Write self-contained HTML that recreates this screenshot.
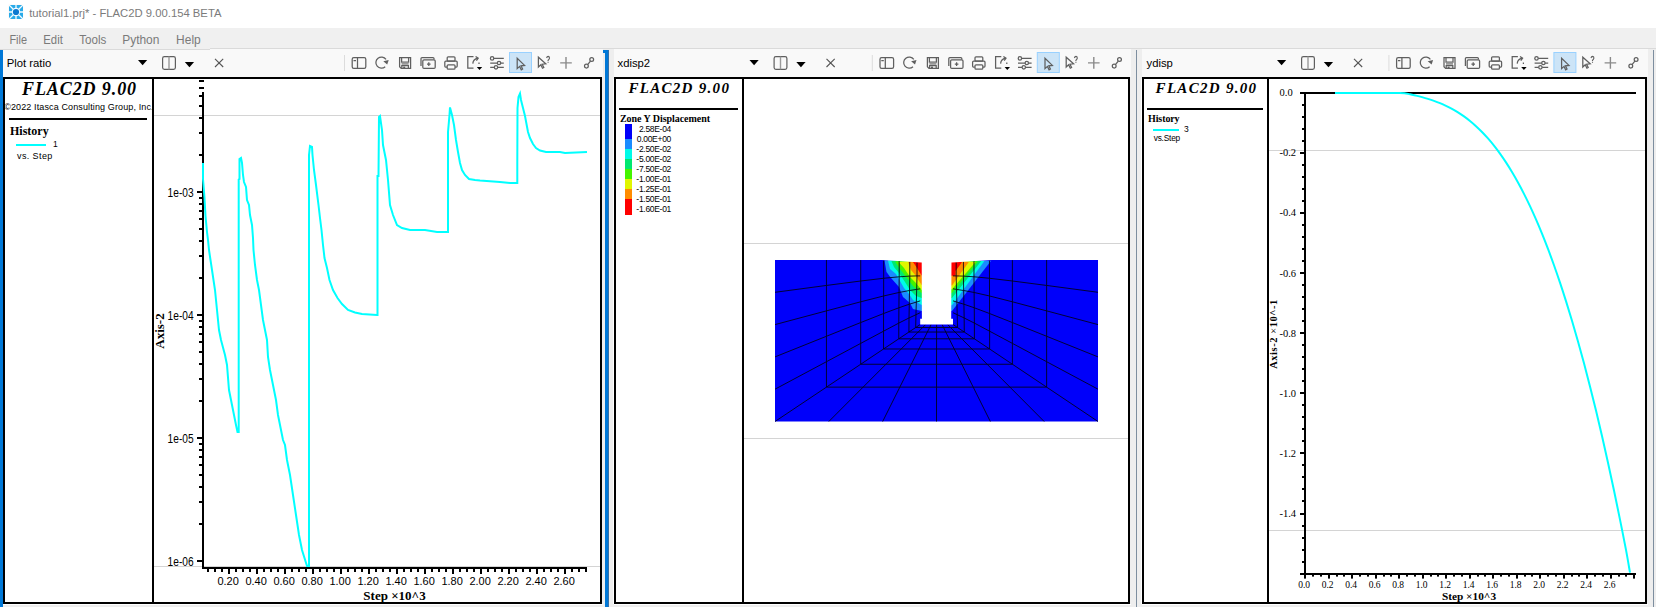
<!DOCTYPE html><html><head><meta charset="utf-8"><style>
html,body{margin:0;padding:0;width:1656px;height:607px;overflow:hidden;background:#eeeeee;}
svg{position:absolute;left:0;top:0;display:block}
.s{font-family:"Liberation Sans",sans-serif}.r{font-family:"Liberation Serif",serif}
</style></head><body>
<svg width="1656" height="607" viewBox="0 0 1656 607">
<rect x="0" y="0" width="1656" height="28" fill="#ffffff" />
<rect x="0" y="28" width="1656" height="21" fill="#f0f0f0" />
<rect x="8.6" y="4.6" width="14.6" height="14.6" fill="#fdf3ee"/>
<rect x="9" y="5" width="14" height="14" fill="#29aae8"/>
<path d="M9,5 L23,19 M23,5 L9,19 M16,5 V19 M9,12 H23" stroke="#f4fbff" stroke-width="1.3"/>
<circle cx="16" cy="12" r="4.2" fill="#f4fbff"/><circle cx="16" cy="12" r="3.1" fill="#0b78d0"/>
<text x="29.2" y="16.8" class="s" font-size="11.5" fill="#7b7b7b" text-anchor="start" font-weight="normal" font-style="normal" textLength="192.3" lengthAdjust="spacingAndGlyphs">tutorial1.prj* - FLAC2D 9.00.154 BETA</text>
<text x="9.4" y="43.8" class="s" font-size="12" fill="#7a7a7a" text-anchor="start" font-weight="normal" font-style="normal" textLength="17.6" lengthAdjust="spacingAndGlyphs">File</text>
<text x="43.3" y="43.8" class="s" font-size="12" fill="#7a7a7a" text-anchor="start" font-weight="normal" font-style="normal" textLength="19.5" lengthAdjust="spacingAndGlyphs">Edit</text>
<text x="79.2" y="43.8" class="s" font-size="12" fill="#7a7a7a" text-anchor="start" font-weight="normal" font-style="normal" textLength="27.1" lengthAdjust="spacingAndGlyphs">Tools</text>
<text x="122.2" y="43.8" class="s" font-size="12" fill="#7a7a7a" text-anchor="start" font-weight="normal" font-style="normal" textLength="37.2" lengthAdjust="spacingAndGlyphs">Python</text>
<text x="176.1" y="43.8" class="s" font-size="12" fill="#7a7a7a" text-anchor="start" font-weight="normal" font-style="normal" textLength="24.6" lengthAdjust="spacingAndGlyphs">Help</text>
<rect x="3" y="49" width="600" height="28" fill="#f9f9f9" />
<text x="6.7" y="67" class="s" font-size="11.3" fill="#000" text-anchor="start" font-weight="normal" font-style="normal" >Plot ratio</text>
<g transform="translate(0,0)">
<path d="M138,60 H147.2 L142.6,65.2 Z" fill="#000"/>
<rect x="162.6" y="56.6" width="12.8" height="12.8" rx="1.8" fill="none" stroke="#5f5f5f" stroke-width="1.2"/>
<path d="M169,56.6 V69.4" stroke="#9a9a9a" stroke-width="1.4"/>
<path d="M184.8,62 H194.1 L189.45,67.3 Z" fill="#000"/>
<path d="M215,58.8 L223.2,67 M223.2,58.8 L215,67" stroke="#555" stroke-width="1.1"/>
</g>
<g transform="translate(0,0)" fill="none" stroke="#5f5f5f" stroke-width="1.25">
<rect x="344" y="55" width="1" height="16" fill="#dcdcdc" stroke="none"/>
<rect x="352.2" y="57.6" width="13.6" height="10.8" rx="1.6"/>
<path d="M357.5,57.6 V68.4 M353.5,60.5 H356" />
<path d="M385.2,66.8 A5.6,5.6 0 1 1 386.0,59.3" />
<path d="M383.3,61.2 L388.7,59.9 L387.2,64.6 Z" fill="#5f5f5f" stroke="none"/>
<path d="M399.6,57.5 H410.6 V68.4 H401.2 L399.6,66.8 Z" />
<path d="M401.6,57.5 V62.2 H408.6 V57.5" />
<rect x="401.6" y="62.6" width="7" height="2.2" fill="#9a9a9a" stroke="none"/>
<path d="M401.8,68.4 V65.6 H408.4 V68.4" />
<rect x="403.2" y="66.6" width="2" height="2" fill="#5f5f5f" stroke="none"/>
<path d="M421.0,66.0 V58.6 Q421.0,57.6 422.0,57.6 H433.0 Q434,57.6 434,58.6 V59.6" />
<rect x="422.8" y="59.8" width="12.4" height="8.6" rx="1.2"/>
<path d="M427,64.1 H430.6 M428.8,62.3 V65.9" />
<rect x="447.2" y="56.8" width="7.8" height="4.4" rx="1"/>
<path d="M447,67 H445.6 Q444.8,67 444.8,66 V62.2 Q444.8,61.2 445.8,61.2 H456.2 Q457.2,61.2 457.2,62.2 V66 Q457.2,67 456.4,67 H455" />
<rect x="447.2" y="64.8" width="7.8" height="4.4" rx="1"/>
<path d="M473.5,56.6 H467.8 V68 H473.5" />
<path d="M472.8,63.6 Q473.2,59.2 477.8,58.2" />
<path d="M475.6,56.4 L478.2,58.2 L476.4,60.6" />
<path d="M479,62.5 V64" />
<path d="M476.8,67 H482.2 L479.5,70 Z" fill="#000" stroke="none"/>
<path d="M490.2,58.4 H503.8 M490.2,63 H503.8 M490.2,67.3 H503.8" />
<circle cx="492.1" cy="58.4" r="1.7" fill="#f9f9f9"/><circle cx="499" cy="63" r="1.7" fill="#f9f9f9"/><circle cx="496" cy="67.3" r="1.7" fill="#f9f9f9"/>
<rect x="509.5" y="52.5" width="22" height="20" fill="#cce4f7" stroke="#99d1ff" stroke-width="1"/>
<path d="M517.2,58.2 V68.6 L519.6,66.4 L521.3,69.8 L522.6,69.1 L521,65.8 L524.6,65.4 Z" fill="#cce4f7"/>
<path d="M538.4,57.2 V67 L540.8,64.8 L542.5,68.2 L543.8,67.5 L542.2,64.2 L545.8,63.8 Z" />
<path d="M546.6,58 Q547,56.4 548.2,56.4 Q549.6,56.6 549.5,58.2 Q549.3,59.4 548.1,60.2 V61.2 M548.1,62.2 V63" stroke-width="1.1"/>
<path d="M560.2,62.9 H571.8 M566,57.1 V68.7" stroke="#8a8a8a" stroke-width="1.4"/>
<circle cx="586.4" cy="66.1" r="1.9"/><circle cx="591.7" cy="59.6" r="1.9"/><path d="M587.6,64.6 L590.5,61.1"/>
</g>
<rect x="614" y="49" width="517" height="28" fill="#f9f9f9" />
<text x="617.5" y="67" class="s" font-size="11.3" fill="#000" text-anchor="start" font-weight="normal" font-style="normal" >xdisp2</text>
<g transform="translate(611.5,0)">
<path d="M138,60 H147.2 L142.6,65.2 Z" fill="#000"/>
<rect x="162.6" y="56.6" width="12.8" height="12.8" rx="1.8" fill="none" stroke="#5f5f5f" stroke-width="1.2"/>
<path d="M169,56.6 V69.4" stroke="#9a9a9a" stroke-width="1.4"/>
<path d="M184.8,62 H194.1 L189.45,67.3 Z" fill="#000"/>
<path d="M215,58.8 L223.2,67 M223.2,58.8 L215,67" stroke="#555" stroke-width="1.1"/>
</g>
<g transform="translate(527.8,0)" fill="none" stroke="#5f5f5f" stroke-width="1.25">
<rect x="344" y="55" width="1" height="16" fill="#dcdcdc" stroke="none"/>
<rect x="352.2" y="57.6" width="13.6" height="10.8" rx="1.6"/>
<path d="M357.5,57.6 V68.4 M353.5,60.5 H356" />
<path d="M385.2,66.8 A5.6,5.6 0 1 1 386.0,59.3" />
<path d="M383.3,61.2 L388.7,59.9 L387.2,64.6 Z" fill="#5f5f5f" stroke="none"/>
<path d="M399.6,57.5 H410.6 V68.4 H401.2 L399.6,66.8 Z" />
<path d="M401.6,57.5 V62.2 H408.6 V57.5" />
<rect x="401.6" y="62.6" width="7" height="2.2" fill="#9a9a9a" stroke="none"/>
<path d="M401.8,68.4 V65.6 H408.4 V68.4" />
<rect x="403.2" y="66.6" width="2" height="2" fill="#5f5f5f" stroke="none"/>
<path d="M421.0,66.0 V58.6 Q421.0,57.6 422.0,57.6 H433.0 Q434,57.6 434,58.6 V59.6" />
<rect x="422.8" y="59.8" width="12.4" height="8.6" rx="1.2"/>
<path d="M427,64.1 H430.6 M428.8,62.3 V65.9" />
<rect x="447.2" y="56.8" width="7.8" height="4.4" rx="1"/>
<path d="M447,67 H445.6 Q444.8,67 444.8,66 V62.2 Q444.8,61.2 445.8,61.2 H456.2 Q457.2,61.2 457.2,62.2 V66 Q457.2,67 456.4,67 H455" />
<rect x="447.2" y="64.8" width="7.8" height="4.4" rx="1"/>
<path d="M473.5,56.6 H467.8 V68 H473.5" />
<path d="M472.8,63.6 Q473.2,59.2 477.8,58.2" />
<path d="M475.6,56.4 L478.2,58.2 L476.4,60.6" />
<path d="M479,62.5 V64" />
<path d="M476.8,67 H482.2 L479.5,70 Z" fill="#000" stroke="none"/>
<path d="M490.2,58.4 H503.8 M490.2,63 H503.8 M490.2,67.3 H503.8" />
<circle cx="492.1" cy="58.4" r="1.7" fill="#f9f9f9"/><circle cx="499" cy="63" r="1.7" fill="#f9f9f9"/><circle cx="496" cy="67.3" r="1.7" fill="#f9f9f9"/>
<rect x="509.5" y="52.5" width="22" height="20" fill="#cce4f7" stroke="#99d1ff" stroke-width="1"/>
<path d="M517.2,58.2 V68.6 L519.6,66.4 L521.3,69.8 L522.6,69.1 L521,65.8 L524.6,65.4 Z" fill="#cce4f7"/>
<path d="M538.4,57.2 V67 L540.8,64.8 L542.5,68.2 L543.8,67.5 L542.2,64.2 L545.8,63.8 Z" />
<path d="M546.6,58 Q547,56.4 548.2,56.4 Q549.6,56.6 549.5,58.2 Q549.3,59.4 548.1,60.2 V61.2 M548.1,62.2 V63" stroke-width="1.1"/>
<path d="M560.2,62.9 H571.8 M566,57.1 V68.7" stroke="#8a8a8a" stroke-width="1.4"/>
<circle cx="586.4" cy="66.1" r="1.9"/><circle cx="591.7" cy="59.6" r="1.9"/><path d="M587.6,64.6 L590.5,61.1"/>
</g>
<rect x="1142" y="49" width="506" height="28" fill="#f9f9f9" />
<rect x="0" y="49" width="210" height="1" fill="#dadada" />
<rect x="210" y="48" width="1446" height="1" fill="#dadada" />
<text x="1146.5" y="67" class="s" font-size="11.3" fill="#000" text-anchor="start" font-weight="normal" font-style="normal" >ydisp</text>
<g transform="translate(1139,0)">
<path d="M138,60 H147.2 L142.6,65.2 Z" fill="#000"/>
<rect x="162.6" y="56.6" width="12.8" height="12.8" rx="1.8" fill="none" stroke="#5f5f5f" stroke-width="1.2"/>
<path d="M169,56.6 V69.4" stroke="#9a9a9a" stroke-width="1.4"/>
<path d="M184.8,62 H194.1 L189.45,67.3 Z" fill="#000"/>
<path d="M215,58.8 L223.2,67 M223.2,58.8 L215,67" stroke="#555" stroke-width="1.1"/>
</g>
<g transform="translate(1044.4,0)" fill="none" stroke="#5f5f5f" stroke-width="1.25">
<rect x="344" y="55" width="1" height="16" fill="#dcdcdc" stroke="none"/>
<rect x="352.2" y="57.6" width="13.6" height="10.8" rx="1.6"/>
<path d="M357.5,57.6 V68.4 M353.5,60.5 H356" />
<path d="M385.2,66.8 A5.6,5.6 0 1 1 386.0,59.3" />
<path d="M383.3,61.2 L388.7,59.9 L387.2,64.6 Z" fill="#5f5f5f" stroke="none"/>
<path d="M399.6,57.5 H410.6 V68.4 H401.2 L399.6,66.8 Z" />
<path d="M401.6,57.5 V62.2 H408.6 V57.5" />
<rect x="401.6" y="62.6" width="7" height="2.2" fill="#9a9a9a" stroke="none"/>
<path d="M401.8,68.4 V65.6 H408.4 V68.4" />
<rect x="403.2" y="66.6" width="2" height="2" fill="#5f5f5f" stroke="none"/>
<path d="M421.0,66.0 V58.6 Q421.0,57.6 422.0,57.6 H433.0 Q434,57.6 434,58.6 V59.6" />
<rect x="422.8" y="59.8" width="12.4" height="8.6" rx="1.2"/>
<path d="M427,64.1 H430.6 M428.8,62.3 V65.9" />
<rect x="447.2" y="56.8" width="7.8" height="4.4" rx="1"/>
<path d="M447,67 H445.6 Q444.8,67 444.8,66 V62.2 Q444.8,61.2 445.8,61.2 H456.2 Q457.2,61.2 457.2,62.2 V66 Q457.2,67 456.4,67 H455" />
<rect x="447.2" y="64.8" width="7.8" height="4.4" rx="1"/>
<path d="M473.5,56.6 H467.8 V68 H473.5" />
<path d="M472.8,63.6 Q473.2,59.2 477.8,58.2" />
<path d="M475.6,56.4 L478.2,58.2 L476.4,60.6" />
<path d="M479,62.5 V64" />
<path d="M476.8,67 H482.2 L479.5,70 Z" fill="#000" stroke="none"/>
<path d="M490.2,58.4 H503.8 M490.2,63 H503.8 M490.2,67.3 H503.8" />
<circle cx="492.1" cy="58.4" r="1.7" fill="#f9f9f9"/><circle cx="499" cy="63" r="1.7" fill="#f9f9f9"/><circle cx="496" cy="67.3" r="1.7" fill="#f9f9f9"/>
<rect x="509.5" y="52.5" width="22" height="20" fill="#cce4f7" stroke="#99d1ff" stroke-width="1"/>
<path d="M517.2,58.2 V68.6 L519.6,66.4 L521.3,69.8 L522.6,69.1 L521,65.8 L524.6,65.4 Z" fill="#cce4f7"/>
<path d="M538.4,57.2 V67 L540.8,64.8 L542.5,68.2 L543.8,67.5 L542.2,64.2 L545.8,63.8 Z" />
<path d="M546.6,58 Q547,56.4 548.2,56.4 Q549.6,56.6 549.5,58.2 Q549.3,59.4 548.1,60.2 V61.2 M548.1,62.2 V63" stroke-width="1.1"/>
<path d="M560.2,62.9 H571.8 M566,57.1 V68.7" stroke="#8a8a8a" stroke-width="1.4"/>
<circle cx="586.4" cy="66.1" r="1.9"/><circle cx="591.7" cy="59.6" r="1.9"/><path d="M587.6,64.6 L590.5,61.1"/>
</g>
<rect x="0" y="604" width="1656" height="3" fill="#eeeeee" />
<rect x="3" y="77" width="599" height="527" fill="#ffffff" />
<rect x="3" y="77" width="599" height="2" fill="#000" />
<rect x="3" y="602" width="599" height="2" fill="#000" />
<rect x="3" y="77" width="2" height="527" fill="#000" />
<rect x="600" y="77" width="2" height="527" fill="#000" />
<rect x="614" y="77" width="516" height="527" fill="#ffffff" />
<rect x="614" y="77" width="516" height="2" fill="#000" />
<rect x="614" y="602" width="516" height="2" fill="#000" />
<rect x="614" y="77" width="2" height="527" fill="#000" />
<rect x="1128" y="77" width="2" height="527" fill="#000" />
<rect x="1142" y="77" width="505" height="527" fill="#ffffff" />
<rect x="1142" y="77" width="505" height="2" fill="#000" />
<rect x="1142" y="602" width="505" height="2" fill="#000" />
<rect x="1142" y="77" width="2" height="527" fill="#000" />
<rect x="1645" y="77" width="2" height="527" fill="#000" />
<rect x="3" y="604" width="600" height="1" fill="#ffffff" />
<rect x="614" y="604" width="517" height="1" fill="#ffffff" />
<rect x="1142" y="604" width="506" height="1" fill="#ffffff" />
<rect x="0" y="50" width="3" height="557" fill="#0078d7" />
<rect x="605" y="50" width="3" height="557" fill="#0078d7" />
<rect x="608" y="50" width="1" height="557" fill="#3570a8" />
<rect x="603" y="50" width="2" height="3" fill="#0078d7" />
<rect x="613" y="79" width="1" height="525" fill="#ffffff" />
<rect x="1141" y="79" width="1" height="525" fill="#ffffff" />
<rect x="1136" y="50" width="1" height="557" fill="#7d8e9f" />
<rect x="1653" y="50" width="1" height="557" fill="#7d8e9f" />
<rect x="152" y="79" width="2" height="523" fill="#000" />
<text x="79.5" y="94.5" class="r" font-size="18" fill="#000" text-anchor="middle" font-weight="bold" font-style="italic" letter-spacing="0.9">FLAC2D 9.00</text>
<svg x="5" y="79" width="147" height="40" overflow="hidden"><text x="-0.8" y="31" class="s" font-size="9" letter-spacing="0.12">©2022 Itasca Consulting Group, Inc.</text></svg>
<rect x="9" y="118" width="138" height="2" fill="#000" />
<text x="10" y="135" class="r" font-size="12" fill="#000" text-anchor="start" font-weight="bold" font-style="normal" >History</text>
<rect x="16" y="144" width="30" height="2" fill="#00ffff" />
<text x="53" y="146.7" class="s" font-size="8.5" fill="#000" text-anchor="start" font-weight="normal" font-style="normal" >1</text>
<text x="17" y="159.4" class="s" font-size="9" fill="#000" text-anchor="start" font-weight="normal" font-style="normal" letter-spacing="0.4">vs. Step</text>
<rect x="154" y="115" width="446" height="1" fill="#d4d4d4" />
<rect x="154" y="566" width="446" height="1" fill="#d4d4d4" />
<rect x="202" y="92" width="2" height="477" fill="#000" />
<rect x="197" y="560" width="5" height="2" fill="#000" />
<rect x="199" y="523" width="3" height="2" fill="#000" />
<rect x="199" y="501" width="3" height="2" fill="#000" />
<rect x="199" y="486" width="3" height="2" fill="#000" />
<rect x="199" y="474" width="3" height="2" fill="#000" />
<rect x="199" y="464" width="3" height="2" fill="#000" />
<rect x="199" y="456" width="3" height="2" fill="#000" />
<rect x="199" y="449" width="3" height="2" fill="#000" />
<rect x="199" y="443" width="3" height="2" fill="#000" />
<rect x="197" y="437" width="5" height="2" fill="#000" />
<rect x="199" y="400" width="3" height="2" fill="#000" />
<rect x="199" y="378" width="3" height="2" fill="#000" />
<rect x="199" y="363" width="3" height="2" fill="#000" />
<rect x="199" y="351" width="3" height="2" fill="#000" />
<rect x="199" y="341" width="3" height="2" fill="#000" />
<rect x="199" y="333" width="3" height="2" fill="#000" />
<rect x="199" y="326" width="3" height="2" fill="#000" />
<rect x="199" y="320" width="3" height="2" fill="#000" />
<rect x="197" y="314" width="5" height="2" fill="#000" />
<rect x="199" y="277" width="3" height="2" fill="#000" />
<rect x="199" y="255" width="3" height="2" fill="#000" />
<rect x="199" y="240" width="3" height="2" fill="#000" />
<rect x="199" y="228" width="3" height="2" fill="#000" />
<rect x="199" y="218" width="3" height="2" fill="#000" />
<rect x="199" y="210" width="3" height="2" fill="#000" />
<rect x="199" y="203" width="3" height="2" fill="#000" />
<rect x="199" y="197" width="3" height="2" fill="#000" />
<rect x="197" y="191" width="5" height="2" fill="#000" />
<rect x="199" y="154" width="3" height="2" fill="#000" />
<rect x="199" y="132" width="3" height="2" fill="#000" />
<rect x="199" y="117" width="3" height="2" fill="#000" />
<rect x="199" y="105" width="3" height="2" fill="#000" />
<rect x="199" y="95" width="3" height="2" fill="#000" />
<rect x="199" y="87" width="5" height="2" fill="#000" />
<rect x="199" y="80" width="5" height="2" fill="#000" />
<text x="193.6" y="196.8" class="s" font-size="13.2" fill="#000" text-anchor="end" font-weight="normal" font-style="normal" textLength="26" lengthAdjust="spacingAndGlyphs">1e-03</text>
<text x="193.6" y="319.8" class="s" font-size="13.2" fill="#000" text-anchor="end" font-weight="normal" font-style="normal" textLength="26" lengthAdjust="spacingAndGlyphs">1e-04</text>
<text x="193.6" y="442.8" class="s" font-size="13.2" fill="#000" text-anchor="end" font-weight="normal" font-style="normal" textLength="26" lengthAdjust="spacingAndGlyphs">1e-05</text>
<text x="193.6" y="565.8" class="s" font-size="13.2" fill="#000" text-anchor="end" font-weight="normal" font-style="normal" textLength="26" lengthAdjust="spacingAndGlyphs">1e-06</text>
<rect x="202" y="567" width="385" height="2" fill="#000" />
<rect x="207" y="569" width="2" height="3" fill="#000" />
<rect x="214" y="569" width="2" height="3" fill="#000" />
<rect x="221" y="569" width="2" height="3" fill="#000" />
<rect x="228" y="569" width="2" height="5" fill="#000" />
<rect x="235" y="569" width="2" height="3" fill="#000" />
<rect x="242" y="569" width="2" height="3" fill="#000" />
<rect x="249" y="569" width="2" height="3" fill="#000" />
<rect x="256" y="569" width="2" height="5" fill="#000" />
<rect x="263" y="569" width="2" height="3" fill="#000" />
<rect x="270" y="569" width="2" height="3" fill="#000" />
<rect x="277" y="569" width="2" height="3" fill="#000" />
<rect x="284" y="569" width="2" height="5" fill="#000" />
<rect x="291" y="569" width="2" height="3" fill="#000" />
<rect x="298" y="569" width="2" height="3" fill="#000" />
<rect x="305" y="569" width="2" height="3" fill="#000" />
<rect x="312" y="569" width="2" height="5" fill="#000" />
<rect x="319" y="569" width="2" height="3" fill="#000" />
<rect x="326" y="569" width="2" height="3" fill="#000" />
<rect x="333" y="569" width="2" height="3" fill="#000" />
<rect x="340" y="569" width="2" height="5" fill="#000" />
<rect x="347" y="569" width="2" height="3" fill="#000" />
<rect x="354" y="569" width="2" height="3" fill="#000" />
<rect x="361" y="569" width="2" height="3" fill="#000" />
<rect x="368" y="569" width="2" height="5" fill="#000" />
<rect x="375" y="569" width="2" height="3" fill="#000" />
<rect x="382" y="569" width="2" height="3" fill="#000" />
<rect x="389" y="569" width="2" height="3" fill="#000" />
<rect x="396" y="569" width="2" height="5" fill="#000" />
<rect x="403" y="569" width="2" height="3" fill="#000" />
<rect x="410" y="569" width="2" height="3" fill="#000" />
<rect x="417" y="569" width="2" height="3" fill="#000" />
<rect x="424" y="569" width="2" height="5" fill="#000" />
<rect x="431" y="569" width="2" height="3" fill="#000" />
<rect x="438" y="569" width="2" height="3" fill="#000" />
<rect x="445" y="569" width="2" height="3" fill="#000" />
<rect x="452" y="569" width="2" height="5" fill="#000" />
<rect x="459" y="569" width="2" height="3" fill="#000" />
<rect x="466" y="569" width="2" height="3" fill="#000" />
<rect x="473" y="569" width="2" height="3" fill="#000" />
<rect x="480" y="569" width="2" height="5" fill="#000" />
<rect x="487" y="569" width="2" height="3" fill="#000" />
<rect x="494" y="569" width="2" height="3" fill="#000" />
<rect x="501" y="569" width="2" height="3" fill="#000" />
<rect x="508" y="569" width="2" height="5" fill="#000" />
<rect x="515" y="569" width="2" height="3" fill="#000" />
<rect x="522" y="569" width="2" height="3" fill="#000" />
<rect x="529" y="569" width="2" height="3" fill="#000" />
<rect x="536" y="569" width="2" height="5" fill="#000" />
<rect x="543" y="569" width="2" height="3" fill="#000" />
<rect x="550" y="569" width="2" height="3" fill="#000" />
<rect x="557" y="569" width="2" height="3" fill="#000" />
<rect x="564" y="569" width="2" height="5" fill="#000" />
<rect x="571" y="569" width="2" height="3" fill="#000" />
<rect x="578" y="569" width="2" height="3" fill="#000" />
<rect x="585" y="569" width="2" height="3" fill="#000" />
<text x="228.1" y="585" class="s" font-size="11" fill="#000" text-anchor="middle" font-weight="normal" font-style="normal" >0.20</text>
<text x="256.1" y="585" class="s" font-size="11" fill="#000" text-anchor="middle" font-weight="normal" font-style="normal" >0.40</text>
<text x="284.1" y="585" class="s" font-size="11" fill="#000" text-anchor="middle" font-weight="normal" font-style="normal" >0.60</text>
<text x="312.1" y="585" class="s" font-size="11" fill="#000" text-anchor="middle" font-weight="normal" font-style="normal" >0.80</text>
<text x="340.1" y="585" class="s" font-size="11" fill="#000" text-anchor="middle" font-weight="normal" font-style="normal" >1.00</text>
<text x="368.1" y="585" class="s" font-size="11" fill="#000" text-anchor="middle" font-weight="normal" font-style="normal" >1.20</text>
<text x="396.1" y="585" class="s" font-size="11" fill="#000" text-anchor="middle" font-weight="normal" font-style="normal" >1.40</text>
<text x="424.1" y="585" class="s" font-size="11" fill="#000" text-anchor="middle" font-weight="normal" font-style="normal" >1.60</text>
<text x="452.1" y="585" class="s" font-size="11" fill="#000" text-anchor="middle" font-weight="normal" font-style="normal" >1.80</text>
<text x="480.1" y="585" class="s" font-size="11" fill="#000" text-anchor="middle" font-weight="normal" font-style="normal" >2.00</text>
<text x="508.1" y="585" class="s" font-size="11" fill="#000" text-anchor="middle" font-weight="normal" font-style="normal" >2.20</text>
<text x="536.1" y="585" class="s" font-size="11" fill="#000" text-anchor="middle" font-weight="normal" font-style="normal" >2.40</text>
<text x="564.1" y="585" class="s" font-size="11" fill="#000" text-anchor="middle" font-weight="normal" font-style="normal" >2.60</text>
<text x="394.5" y="600" class="r" font-size="13" fill="#000" text-anchor="middle" font-weight="bold" font-style="normal" >Step ×10^3</text>
<text class="r" font-size="13" font-weight="bold" text-anchor="middle" transform="translate(164.3,331) rotate(-90)">Axis-2</text>
<polyline fill="none" stroke="#00ffff" stroke-width="2" stroke-linejoin="miter" points="203,163 203,179 204.5,198 205.5,216 207,232 208,240 209,250 212,270 215,290 217,310 219,330 221,340 225,355 227,365 229,390 231,400 234,415 236,425 237.5,432 238.7,432 238.7,179.6 239.5,179 239.5,159 241,158 242,163 243,175 244,182 246,187 247,200 249,205 250,215 252,225 253,238 253.5,250 255,265 257,280 259,290 261,305 263,320 265,330 267,340 268,357 270,370 273,385 276,400 278,415 280,425 283,440 285,445 287,460 290,475 293,495 296,515 299,535 302,550 307,566 307.5,566 309,566 309,155 310,146 312,147 312.5,155 314,170 316,185 318.5,205 320,218 321.5,230 323,245 324.5,258 327,268 329.5,280 333,290 337.5,298 342,304 348,310 355,312.5 362,314 377,315 377.5,315 377.5,176 378.5,176 379,117 380,116 382,130 383,145 386,160 388,180 390,205 393,215 397,225 402,228 410,230 425,230 437,232 447,232 448,232 448,132 449.5,115 450,107.4 452,115 454,125 456,140 458,152 460,163 462,170 465,175 469,179 475,180 480,180.5 500,182 510,183 517,183 517.3,183 517.3,162 517.5,108 518.5,97 520,93.5 521,100 523,108 525,116 526.5,124 528,132 530,138 533,144 536,148 540,150.5 546,152 560,152 565,153 587,152"/>
<rect x="742" y="79" width="2" height="523" fill="#000" />
<text x="679.3" y="92.6" class="r" font-size="15" fill="#000" text-anchor="middle" font-weight="bold" font-style="italic" letter-spacing="1.3">FLAC2D 9.00</text>
<rect x="619" y="108" width="119" height="2" fill="#000" />
<text x="620" y="122.3" class="r" font-size="10" fill="#000" text-anchor="start" font-weight="bold" font-style="normal" letter-spacing="-0.05">Zone Y Displacement</text>
<rect x="625" y="124" width="7" height="15" fill="#0000fa" />
<rect x="625" y="139" width="7" height="10" fill="#1a8cff" />
<rect x="625" y="149" width="7" height="10" fill="#00fbe8" />
<rect x="625" y="159" width="7" height="10" fill="#00e870" />
<rect x="625" y="169" width="7" height="10" fill="#44f400" />
<rect x="625" y="179" width="7" height="10" fill="#e0f600" />
<rect x="625" y="189" width="7" height="10" fill="#ff8c00" />
<rect x="625" y="199" width="7" height="16" fill="#ff0000" />
<text x="671" y="131.7" class="s" font-size="8.5" fill="#000" text-anchor="end" font-weight="normal" font-style="normal" letter-spacing="-0.3">2.58E-04</text>
<text x="671" y="142.0" class="s" font-size="8.5" fill="#000" text-anchor="end" font-weight="normal" font-style="normal" letter-spacing="-0.3">0.00E+00</text>
<text x="671" y="152.0" class="s" font-size="8.5" fill="#000" text-anchor="end" font-weight="normal" font-style="normal" letter-spacing="-0.3">-2.50E-02</text>
<text x="671" y="162.0" class="s" font-size="8.5" fill="#000" text-anchor="end" font-weight="normal" font-style="normal" letter-spacing="-0.3">-5.00E-02</text>
<text x="671" y="172.0" class="s" font-size="8.5" fill="#000" text-anchor="end" font-weight="normal" font-style="normal" letter-spacing="-0.3">-7.50E-02</text>
<text x="671" y="182.0" class="s" font-size="8.5" fill="#000" text-anchor="end" font-weight="normal" font-style="normal" letter-spacing="-0.3">-1.00E-01</text>
<text x="671" y="192.0" class="s" font-size="8.5" fill="#000" text-anchor="end" font-weight="normal" font-style="normal" letter-spacing="-0.3">-1.25E-01</text>
<text x="671" y="202.0" class="s" font-size="8.5" fill="#000" text-anchor="end" font-weight="normal" font-style="normal" letter-spacing="-0.3">-1.50E-01</text>
<text x="671" y="212.0" class="s" font-size="8.5" fill="#000" text-anchor="end" font-weight="normal" font-style="normal" letter-spacing="-0.3">-1.60E-01</text>
<rect x="744" y="243" width="384" height="1" fill="#d4d4d4" />
<rect x="744" y="438" width="384" height="1" fill="#d4d4d4" />
<rect x="775" y="260" width="323" height="161.5" fill="#0000fa" />
<polygon points="923,260 884.5,260.5 886.5,272 891,278 899,287 903,297 910,303 913,309 921.7,311 923,311" fill="#1a8cff"/>
<polygon points="950.5,260 990.9,261 952,311 950.5,311" fill="#1a8cff"/>
<polygon points="923,260 888,260.5 890,269 896,274 900,281 904,288 909,294 913,300 921.7,305 923,305" fill="#00fbe8"/>
<polygon points="950.5,260 984.4,261 952,305.2 950.5,305.2" fill="#00fbe8"/>
<polygon points="923,260 891.4,261 894,267 899,273 905,282 910,290 916,296 921.7,298 923,298" fill="#00e870"/>
<polygon points="950.5,260 981.3,261 952,298 950.5,298" fill="#00e870"/>
<polygon points="923,260 895,261.5 900,269 907,278 913,286 921.7,293 923,293" fill="#44f400"/>
<polygon points="950.5,260 978,261.5 952,293 950.5,293" fill="#44f400"/>
<polygon points="923,260 898.5,262 904,268 910,277 915,282 921.7,290 923,290" fill="#e0f600"/>
<polygon points="950.5,260 975.5,262 952,289.3 950.5,289.3" fill="#e0f600"/>
<polygon points="923,260 908.2,262 911,270 916,276 919,281 921.7,285 923,285" fill="#ff8c00"/>
<polygon points="950.5,260 968.8,262 952,285.5 950.5,285.5" fill="#ff8c00"/>
<polygon points="923,260 913,262 917,268 921.7,275.5 923,275.5" fill="#ff0000"/>
<polygon points="950.5,260 962,262.3 955.5,271 955.5,275.7 952,275.7 950.5,275.7" fill="#ff0000"/>
<path d="M917.02,262.39 L917.02,275.90 L916.68,289.40 L916.32,302.11 L915.96,314.71 L915.68,327.52 L922.66,327.52 L929.63,327.52 L936.60,327.52 L943.57,327.52 L950.54,327.52 L957.51,327.52 L957.23,314.71 L956.87,302.11 L956.51,289.40 L956.18,275.90 L956.18,262.39 M909.77,261.71 L909.77,276.11 L909.52,290.51 L909.28,304.23 L909.03,317.96 L908.92,332.04 L918.14,332.04 L927.37,332.04 L936.59,332.04 L945.82,332.04 L955.04,332.04 L964.27,332.04 L964.15,317.96 L963.91,304.23 L963.66,290.51 L963.42,276.12 L963.42,261.71 M899.20,261.03 L899.19,276.79 L899.05,292.47 L898.92,307.78 L898.78,323.10 L898.77,338.82 L911.37,338.82 L923.98,338.82 L936.59,338.82 L949.19,338.82 L961.80,338.82 L974.40,338.82 L974.39,323.10 L974.25,307.78 L974.12,292.47 L973.98,276.79 L973.97,261.03 M883.69,260.48 L883.68,278.28 L883.63,295.98 L883.57,313.54 L883.54,331.19 L883.54,348.99 L901.22,348.99 L918.90,348.99 L936.57,348.99 L954.25,348.99 L971.93,348.99 L989.61,348.99 L989.61,331.19 L989.58,313.54 L989.52,295.98 L989.47,278.28 L989.46,260.48 M860.73,260.15 L860.73,281.00 L860.71,301.80 L860.70,322.56 L860.70,343.40 L860.70,364.25 L885.98,364.25 L911.27,364.25 L936.56,364.25 L961.85,364.25 L987.13,364.25 L1012.42,364.25 L1012.42,343.40 L1012.42,322.56 L1012.41,301.80 L1012.39,281.00 L1012.39,260.15 M826.45,260.03 L826.45,285.45 L826.45,310.86 L826.44,336.28 L826.44,361.71 L826.44,387.13 L863.14,387.13 L899.84,387.13 L936.54,387.13 L973.23,387.13 L1009.93,387.13 L1046.63,387.13 L1046.63,361.71 L1046.63,336.28 L1046.63,310.86 L1046.62,285.45 L1046.62,260.03 M920.20,275.90 L917.02,275.90 L909.77,276.11 L899.19,276.79 L883.68,278.28 L860.73,281.00 L826.45,285.45 L775.00,292.30 M920.20,288.80 L916.68,289.40 L909.52,290.51 L899.05,292.47 L883.63,295.98 L860.71,301.80 L826.45,310.86 L775.00,324.60 M920.20,300.85 L916.32,302.11 L909.28,304.23 L898.92,307.78 L883.57,313.54 L860.70,322.56 L826.44,336.28 L775.00,356.90 M920.20,312.68 L915.96,314.71 L909.03,317.96 L898.78,323.10 L883.54,331.19 L860.70,343.40 L826.44,361.71 L775.00,389.20 M920.20,324.50 L915.68,327.52 L908.92,332.04 L898.77,338.82 L883.54,348.99 L860.70,364.25 L826.44,387.13 L775.00,421.50 M925.67,324.50 L922.66,327.52 L918.14,332.04 L911.37,338.82 L901.22,348.99 L885.98,364.25 L863.14,387.13 L828.83,421.50 M931.13,324.50 L929.63,327.52 L927.37,332.04 L923.98,338.82 L918.90,348.99 L911.27,364.25 L899.84,387.13 L882.67,421.50 M936.60,324.50 L936.60,327.52 L936.59,332.04 L936.59,338.82 L936.57,348.99 L936.56,364.25 L936.54,387.13 L936.50,421.50 M942.07,324.50 L943.57,327.52 L945.82,332.04 L949.19,338.82 L954.25,348.99 L961.85,364.25 L973.23,387.13 L990.33,421.50 M947.53,324.50 L950.54,327.52 L955.04,332.04 L961.80,338.82 L971.93,348.99 L987.13,364.25 L1009.93,387.13 L1044.17,421.50 M953.00,324.50 L957.51,327.52 L964.27,332.04 L974.40,338.82 L989.61,348.99 L1012.42,364.25 L1046.63,387.13 L1098.00,421.50 M953.00,312.68 L957.23,314.71 L964.15,317.96 L974.39,323.10 L989.61,331.19 L1012.42,343.40 L1046.63,361.71 L1098.00,389.20 M953.00,300.85 L956.87,302.11 L963.91,304.23 L974.25,307.78 L989.58,313.54 L1012.42,322.56 L1046.63,336.28 L1098.00,356.90 M953.00,288.80 L956.51,289.40 L963.66,290.51 L974.12,292.47 L989.52,295.98 L1012.41,301.80 L1046.63,310.86 L1098.00,324.60 M953.00,275.90 L956.18,275.90 L963.42,276.12 L973.98,276.79 L989.47,278.28 L1012.39,281.00 L1046.62,285.45 L1098.00,292.30" fill="none" stroke="#000014" stroke-width="0.85"/>
<polygon points="950.5,257 992,257 992,260 952,262.4 950.5,262.4" fill="#fff"/>
<polygon points="923,257 882,257 882,260 921.7,262.6 923,262.6" fill="#fff"/>
<polygon points="921.7,257 951.5,257 951.2,318.7 953,318.7 953,324.5 920.2,324.5 920.2,318.7 921.9000000000001,318.7" fill="#ffffff"/>
<rect x="1267" y="79" width="2" height="523" fill="#000" />
<text x="1206.5" y="92.6" class="r" font-size="15" fill="#000" text-anchor="middle" font-weight="bold" font-style="italic" letter-spacing="1.3">FLAC2D 9.00</text>
<rect x="1147" y="108" width="116" height="2" fill="#000" />
<text x="1148" y="122.4" class="r" font-size="10" fill="#000" text-anchor="start" font-weight="bold" font-style="normal" letter-spacing="-0.1">History</text>
<rect x="1153" y="129" width="26" height="2" fill="#00ffff" />
<text x="1184" y="132.2" class="s" font-size="8.5" fill="#000" text-anchor="start" font-weight="normal" font-style="normal" >3</text>
<text x="1153.7" y="141.2" class="s" font-size="8.3" fill="#000" text-anchor="start" font-weight="normal" font-style="normal" letter-spacing="-0.2">vs.Step</text>
<rect x="1269" y="150" width="376" height="1" fill="#d4d4d4" />
<rect x="1269" y="530" width="376" height="1" fill="#d4d4d4" />
<rect x="1304" y="92" width="2" height="483" fill="#000" />
<rect x="1300" y="92" width="336" height="2" fill="#000" />
<rect x="1304" y="573" width="332" height="2" fill="#000" />
<rect x="1300" y="92" width="4" height="2" fill="#000" />
<rect x="1302" y="104" width="2" height="2" fill="#000" />
<rect x="1302" y="116" width="2" height="2" fill="#000" />
<rect x="1302" y="128" width="2" height="2" fill="#000" />
<rect x="1302" y="140" width="2" height="2" fill="#000" />
<rect x="1300" y="152" width="4" height="2" fill="#000" />
<rect x="1302" y="164" width="2" height="2" fill="#000" />
<rect x="1302" y="176" width="2" height="2" fill="#000" />
<rect x="1302" y="188" width="2" height="2" fill="#000" />
<rect x="1302" y="200" width="2" height="2" fill="#000" />
<rect x="1300" y="212" width="4" height="2" fill="#000" />
<rect x="1302" y="224" width="2" height="2" fill="#000" />
<rect x="1302" y="236" width="2" height="2" fill="#000" />
<rect x="1302" y="248" width="2" height="2" fill="#000" />
<rect x="1302" y="260" width="2" height="2" fill="#000" />
<rect x="1300" y="272" width="4" height="2" fill="#000" />
<rect x="1302" y="284" width="2" height="2" fill="#000" />
<rect x="1302" y="296" width="2" height="2" fill="#000" />
<rect x="1302" y="308" width="2" height="2" fill="#000" />
<rect x="1302" y="320" width="2" height="2" fill="#000" />
<rect x="1300" y="332" width="4" height="2" fill="#000" />
<rect x="1302" y="344" width="2" height="2" fill="#000" />
<rect x="1302" y="356" width="2" height="2" fill="#000" />
<rect x="1302" y="368" width="2" height="2" fill="#000" />
<rect x="1302" y="380" width="2" height="2" fill="#000" />
<rect x="1300" y="392" width="4" height="2" fill="#000" />
<rect x="1302" y="404" width="2" height="2" fill="#000" />
<rect x="1302" y="416" width="2" height="2" fill="#000" />
<rect x="1302" y="428" width="2" height="2" fill="#000" />
<rect x="1302" y="440" width="2" height="2" fill="#000" />
<rect x="1300" y="452" width="4" height="2" fill="#000" />
<rect x="1302" y="464" width="2" height="2" fill="#000" />
<rect x="1302" y="476" width="2" height="2" fill="#000" />
<rect x="1302" y="488" width="2" height="2" fill="#000" />
<rect x="1302" y="500" width="2" height="2" fill="#000" />
<rect x="1300" y="513" width="4" height="2" fill="#000" />
<rect x="1302" y="525" width="2" height="2" fill="#000" />
<rect x="1302" y="537" width="2" height="2" fill="#000" />
<rect x="1302" y="549" width="2" height="2" fill="#000" />
<rect x="1302" y="561" width="2" height="2" fill="#000" />
<rect x="1300" y="573" width="4" height="2" fill="#000" />
<text x="1279.5" y="96.2" class="r" font-size="10.5" fill="#000" text-anchor="start" font-weight="normal" font-style="normal" >0.0</text>
<text x="1279.5" y="156.3" class="r" font-size="10.5" fill="#000" text-anchor="start" font-weight="normal" font-style="normal" >-0.2</text>
<text x="1279.5" y="216.4" class="r" font-size="10.5" fill="#000" text-anchor="start" font-weight="normal" font-style="normal" >-0.4</text>
<text x="1279.5" y="276.5" class="r" font-size="10.5" fill="#000" text-anchor="start" font-weight="normal" font-style="normal" >-0.6</text>
<text x="1279.5" y="336.59999999999997" class="r" font-size="10.5" fill="#000" text-anchor="start" font-weight="normal" font-style="normal" >-0.8</text>
<text x="1279.5" y="396.7" class="r" font-size="10.5" fill="#000" text-anchor="start" font-weight="normal" font-style="normal" >-1.0</text>
<text x="1279.5" y="456.80000000000007" class="r" font-size="10.5" fill="#000" text-anchor="start" font-weight="normal" font-style="normal" >-1.2</text>
<text x="1279.5" y="516.9" class="r" font-size="10.5" fill="#000" text-anchor="start" font-weight="normal" font-style="normal" >-1.4</text>
<rect x="1304" y="575" width="2" height="3.6" fill="#000" />
<rect x="1312" y="575" width="2" height="1.6" fill="#000" />
<rect x="1320" y="575" width="2" height="1.6" fill="#000" />
<rect x="1328" y="575" width="2" height="3.6" fill="#000" />
<rect x="1336" y="575" width="2" height="1.6" fill="#000" />
<rect x="1343" y="575" width="2" height="1.6" fill="#000" />
<rect x="1351" y="575" width="2" height="3.6" fill="#000" />
<rect x="1359" y="575" width="2" height="1.6" fill="#000" />
<rect x="1367" y="575" width="2" height="1.6" fill="#000" />
<rect x="1375" y="575" width="2" height="3.6" fill="#000" />
<rect x="1383" y="575" width="2" height="1.6" fill="#000" />
<rect x="1390" y="575" width="2" height="1.6" fill="#000" />
<rect x="1398" y="575" width="2" height="3.6" fill="#000" />
<rect x="1406" y="575" width="2" height="1.6" fill="#000" />
<rect x="1414" y="575" width="2" height="1.6" fill="#000" />
<rect x="1422" y="575" width="2" height="3.6" fill="#000" />
<rect x="1430" y="575" width="2" height="1.6" fill="#000" />
<rect x="1437" y="575" width="2" height="1.6" fill="#000" />
<rect x="1445" y="575" width="2" height="3.6" fill="#000" />
<rect x="1453" y="575" width="2" height="1.6" fill="#000" />
<rect x="1461" y="575" width="2" height="1.6" fill="#000" />
<rect x="1469" y="575" width="2" height="3.6" fill="#000" />
<rect x="1477" y="575" width="2" height="1.6" fill="#000" />
<rect x="1484" y="575" width="2" height="1.6" fill="#000" />
<rect x="1492" y="575" width="2" height="3.6" fill="#000" />
<rect x="1500" y="575" width="2" height="1.6" fill="#000" />
<rect x="1508" y="575" width="2" height="1.6" fill="#000" />
<rect x="1516" y="575" width="2" height="3.6" fill="#000" />
<rect x="1524" y="575" width="2" height="1.6" fill="#000" />
<rect x="1531" y="575" width="2" height="1.6" fill="#000" />
<rect x="1539" y="575" width="2" height="3.6" fill="#000" />
<rect x="1547" y="575" width="2" height="1.6" fill="#000" />
<rect x="1555" y="575" width="2" height="1.6" fill="#000" />
<rect x="1563" y="575" width="2" height="3.6" fill="#000" />
<rect x="1571" y="575" width="2" height="1.6" fill="#000" />
<rect x="1578" y="575" width="2" height="1.6" fill="#000" />
<rect x="1586" y="575" width="2" height="3.6" fill="#000" />
<rect x="1594" y="575" width="2" height="1.6" fill="#000" />
<rect x="1602" y="575" width="2" height="1.6" fill="#000" />
<rect x="1610" y="575" width="2" height="3.6" fill="#000" />
<rect x="1618" y="575" width="2" height="1.6" fill="#000" />
<rect x="1625" y="575" width="2" height="1.6" fill="#000" />
<rect x="1633" y="575" width="2" height="3.6" fill="#000" />
<text x="1304.1" y="588" class="r" font-size="9.5" fill="#000" text-anchor="middle" font-weight="normal" font-style="normal" >0.0</text>
<text x="1327.6" y="588" class="r" font-size="9.5" fill="#000" text-anchor="middle" font-weight="normal" font-style="normal" >0.2</text>
<text x="1351.1" y="588" class="r" font-size="9.5" fill="#000" text-anchor="middle" font-weight="normal" font-style="normal" >0.4</text>
<text x="1374.6" y="588" class="r" font-size="9.5" fill="#000" text-anchor="middle" font-weight="normal" font-style="normal" >0.6</text>
<text x="1398.1" y="588" class="r" font-size="9.5" fill="#000" text-anchor="middle" font-weight="normal" font-style="normal" >0.8</text>
<text x="1421.6" y="588" class="r" font-size="9.5" fill="#000" text-anchor="middle" font-weight="normal" font-style="normal" >1.0</text>
<text x="1445.1" y="588" class="r" font-size="9.5" fill="#000" text-anchor="middle" font-weight="normal" font-style="normal" >1.2</text>
<text x="1468.6" y="588" class="r" font-size="9.5" fill="#000" text-anchor="middle" font-weight="normal" font-style="normal" >1.4</text>
<text x="1492.1" y="588" class="r" font-size="9.5" fill="#000" text-anchor="middle" font-weight="normal" font-style="normal" >1.6</text>
<text x="1515.6" y="588" class="r" font-size="9.5" fill="#000" text-anchor="middle" font-weight="normal" font-style="normal" >1.8</text>
<text x="1539.1" y="588" class="r" font-size="9.5" fill="#000" text-anchor="middle" font-weight="normal" font-style="normal" >2.0</text>
<text x="1562.6" y="588" class="r" font-size="9.5" fill="#000" text-anchor="middle" font-weight="normal" font-style="normal" >2.2</text>
<text x="1586.1" y="588" class="r" font-size="9.5" fill="#000" text-anchor="middle" font-weight="normal" font-style="normal" >2.4</text>
<text x="1609.6" y="588" class="r" font-size="9.5" fill="#000" text-anchor="middle" font-weight="normal" font-style="normal" >2.6</text>
<text x="1469" y="600" class="r" font-size="11.3" fill="#000" text-anchor="middle" font-weight="bold" font-style="normal" >Step ×10^3</text>
<text class="r" font-size="10.5" font-weight="bold" text-anchor="middle" letter-spacing="0.55" transform="translate(1276.6,334) rotate(-90)">Axis-2 <tspan font-weight="normal">×</tspan>10^-1</text>
<path fill="none" stroke="#00ffff" stroke-width="2" d="M1335,93 C1340.83,93.00 1359.17,93.00 1370,93 C1380.83,93.00 1393.33,92.80 1400,93 C1406.67,93.20 1407.33,93.78 1410,94.22 C1412.67,94.66 1414.00,95.13 1416,95.62 C1418.00,96.11 1420.00,96.61 1422,97.15 C1424.00,97.70 1426.00,98.27 1428,98.89 C1430.00,99.51 1432.00,100.16 1434,100.87 C1436.00,101.58 1438.00,102.33 1440,103.16 C1442.00,103.98 1444.00,104.87 1446,105.82 C1448.00,106.77 1450.00,107.78 1452,108.88 C1454.00,109.97 1456.00,111.13 1458,112.39 C1460.00,113.65 1462.00,114.99 1464,116.42 C1466.00,117.85 1468.00,119.37 1470,120.99 C1472.00,122.61 1474.00,124.33 1476,126.16 C1478.00,127.99 1480.00,129.92 1482,131.97 C1484.00,134.02 1486.00,136.18 1488,138.46 C1490.00,140.74 1492.00,143.14 1494,145.67 C1496.00,148.20 1498.00,150.85 1500,153.64 C1502.00,156.43 1504.00,159.35 1506,162.41 C1508.00,165.47 1510.00,168.67 1512,172.02 C1514.00,175.37 1516.00,178.85 1518,182.49 C1520.00,186.13 1522.00,189.92 1524,193.86 C1526.00,197.81 1528.00,201.90 1530,206.16 C1532.00,210.42 1534.00,214.84 1536,219.43 C1538.00,224.02 1540.00,228.77 1542,233.69 C1544.00,238.61 1546.00,243.70 1548,248.96 C1550.00,254.22 1552.00,259.66 1554,265.28 C1556.00,270.90 1558.00,276.69 1560,282.67 C1562.00,288.65 1564.00,294.80 1566,301.15 C1568.00,307.50 1570.00,314.02 1572,320.74 C1574.00,327.46 1576.00,334.36 1578,341.46 C1580.00,348.56 1582.00,355.85 1584,363.34 C1586.00,370.83 1588.00,378.50 1590,386.38 C1592.00,394.26 1594.00,402.33 1596,410.6 C1598.00,418.88 1600.00,427.35 1602,436.03 C1604.00,444.71 1606.00,453.58 1608,462.66 C1610.00,471.74 1612.00,481.02 1614,490.51 C1616.00,500.00 1618.00,509.69 1620,519.59 C1622.00,529.49 1624.33,541.07 1626,549.92 C1627.67,558.77 1629.33,568.90 1630,572.7"/>
</svg></body></html>
